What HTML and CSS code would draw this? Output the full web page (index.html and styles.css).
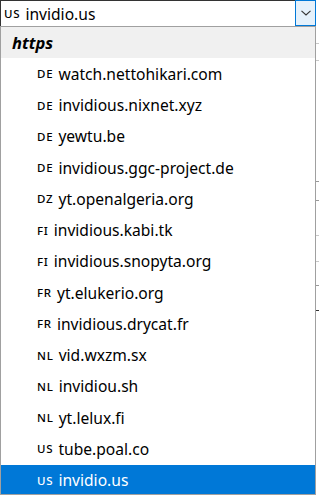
FILE: index.html
```html
<!DOCTYPE html>
<html>
<head>
<meta charset="utf-8">
<link rel="stylesheet" href="styles.css">
</head>
<body>
<div class="page">
  <div class="backdrop">
    <div class="bl bl1"></div>
    <div class="bl bl2"></div>
    <div class="bl bl3"></div>
    <div class="bl bl4"></div>
    <div class="bl bl5"></div>
    <div class="bl bl6"></div>
    <div class="bl bl7"></div>
    <div class="bl bl8 dark"></div>
  </div>
  <div class="dropdown">
    <div class="select">
      <div class="value"><span class="cc">US</span> invidio.us</div>
      <div class="arrow">
        <svg width="10" height="6" viewBox="0 0 10 6"><path d="M0.5 0.8 L5 5 L9.5 0.8" fill="none" stroke="#333" stroke-width="1.1"/></svg>
      </div>
    </div>
    <div class="list">
      <div class="group">https</div>
      <div class="item"><span class="cc">DE</span> watch.nettohikari.com</div>
      <div class="item"><span class="cc">DE</span> invidious.nixnet.xyz</div>
      <div class="item"><span class="cc">DE</span> yewtu.be</div>
      <div class="item"><span class="cc">DE</span> invidious.ggc-project.de</div>
      <div class="item"><span class="cc">DZ</span> yt.openalgeria.org</div>
      <div class="item"><span class="cc">FI</span> invidious.kabi.tk</div>
      <div class="item"><span class="cc">FI</span> invidious.snopyta.org</div>
      <div class="item"><span class="cc">FR</span> yt.elukerio.org</div>
      <div class="item"><span class="cc">FR</span> invidious.drycat.fr</div>
      <div class="item"><span class="cc">NL</span> vid.wxzm.sx</div>
      <div class="item"><span class="cc">NL</span> invidiou.sh</div>
      <div class="item"><span class="cc">NL</span> yt.lelux.fi</div>
      <div class="item"><span class="cc">US</span> tube.poal.co</div>
      <div class="item selected"><span class="cc">US</span> invidio.us</div>
    </div>
  </div>
</div>
</body>
</html>
```
FILE: styles.css
```css
html, body {
  margin: 0;
  padding: 0;
  background: #fff;
}
body {
  font-family: "Noto Sans", "Open Sans", sans-serif;
  font-size: 15.6px;
  color: #000;
}
.page {
  position: relative;
  width: 319px;
  height: 498px;
  overflow: hidden;
}
.backdrop {
  position: absolute;
  left: 0;
  top: 0;
  width: 319px;
  height: 498px;
}
.bl {
  position: absolute;
  right: 0;
  width: 6px;
  height: 1px;
  background: #c8c8c8;
}
.bl.dark { background: #333; }
.bl1 { top: 43px; }
.bl2 { top: 60px; }
.bl3 { top: 181px; background: #999; }
.bl4 { top: 200px; background: #999; }
.bl5 { top: 235px; }
.bl6 { top: 261px; }
.bl7 { top: 285px; background: #999; }
.bl8 { top: 310px; }
.dropdown {
  position: absolute;
  left: 0;
  top: 0;
  width: 316px;
}
.select {
  display: flex;
  height: 26px;
  box-sizing: border-box;
  border-top: 1px solid #333;
  border-left: 1px solid #333;
  background: #fff;
}
.value {
  flex: 1;
  display: flex;
  align-items: center;
  padding-left: 3px;
  white-space: nowrap;
}
.arrow {
  width: 21px;
  box-sizing: border-box;
  border: 1px solid #0078d7;
  background: #e5f1fb;
  display: flex;
  align-items: center;
  justify-content: center;
  margin-top: -1px;
  height: 26px;
}
.list {
  box-sizing: border-box;
  border: 1px solid #a0a0a0;
  height: 469px;
  background: #fff;
  overflow: hidden;
}
.group {
  height: 31.25px;
  background: #f0f0f0;
  font-weight: bold;
  font-style: italic;
  font-size: 16.5px;
  display: flex;
  align-items: center;
  padding-left: 11px;
}
.item {
  height: 31.25px;
  display: flex;
  align-items: center;
  padding-left: 36px;
  white-space: nowrap;
}
.item.selected {
  background: #0078d7;
  color: #fff;
}
.cc {
  font-size: 11.5px;
  margin-right: 5px;
  letter-spacing: 0.8px;
  font-weight: 500;
}
```
